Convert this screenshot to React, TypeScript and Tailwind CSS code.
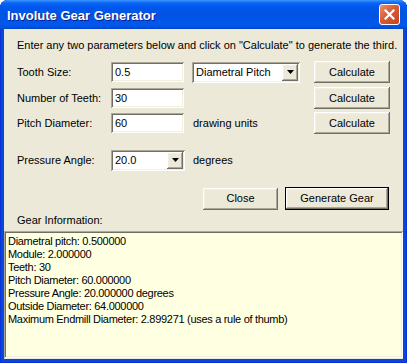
import React from 'react';

const raised =
  'bg-[#ECE9D8] shadow-[inset_-1px_-1px_0_#716F64,inset_1px_1px_0_#FFFFFF,inset_-2px_-2px_0_#ACA899,inset_2px_2px_0_#F1EFE2]';
const sunken =
  'shadow-[inset_1px_1px_0_#ACA899,inset_-1px_-1px_0_#FFFFFF,inset_2px_2px_0_#716F64,inset_-2px_-2px_0_#F1EFE2]';

function Field({ value, width }: { value: string; width: string }) {
  return (
    <div className={`${width} h-[20px] bg-white ${sunken} pl-[4px] flex items-center`}>{value}</div>
  );
}

function Arrow() {
  return (
    <div className={`w-[16px] h-[17px] ${raised} flex items-center justify-center`}>
      <svg width="7" height="4" viewBox="0 0 7 4">
        <path d="M0 0h7L3.5 4z" fill="#000" />
      </svg>
    </div>
  );
}

function Combo({ value, width }: { value: string; width: string }) {
  return (
    <div className={`${width} h-[21px] bg-white ${sunken} flex items-center pl-[4px] pr-[2px]`}>
      <span className="flex-1">{value}</span>
      <Arrow />
    </div>
  );
}

function Button({ label, width, isDefault }: { label: string; width: string; isDefault?: boolean }) {
  if (isDefault) {
    return (
      <div className={`${width} h-[23px] border border-black`}>
        <div className={`h-full ${raised} flex items-center justify-center`}>{label}</div>
      </div>
    );
  }
  return <div className={`${width} h-[22px] ${raised} flex items-center justify-center`}>{label}</div>;
}

const info = [
  'Diametral pitch: 0.500000',
  'Module: 2.000000',
  'Teeth: 30',
  'Pitch Diameter: 60.000000',
  'Pressure Angle: 20.000000 degrees',
  'Outside Diameter: 64.000000',
  'Maximum Endmill Diameter: 2.899271 (uses a rule of thumb)',
];

export default function App() {
  return (
    <div className="w-[407px] h-[363px] bg-white">
      <div className="w-[407px] h-[363px] flex flex-col rounded-t-[8px] overflow-hidden bg-[#0748D8] shadow-[inset_1px_0_0_#0831D9,inset_-1px_0_0_#0831D9,inset_0_-1px_0_#0831D9] px-[4px] pb-[4px] text-[11px] leading-[13px] text-black font-['Liberation_Sans',Arial,sans-serif]">
        {/* Title bar */}
        <div className="-mx-[4px] h-[29px] flex items-center pl-[7px] pr-[7px] bg-[linear-gradient(to_bottom,#3D95FF_0%,#0A66F5_10%,#0058EE_22%,#0054E3_50%,#0058EC_85%,#0052E0_93%,#0045C8_100%)]">
          <span className="flex-1 text-white font-bold text-[13px] [text-shadow:1px_1px_0_#0F1E88] pt-[2px]">
            Involute Gear Generator
          </span>
          <div className="w-[21px] h-[21px] rounded-[3px] border border-white bg-[linear-gradient(135deg,#E9906F_0%,#D95B33_45%,#C8431A_100%)] flex items-center justify-center">
            <svg width="11" height="11" viewBox="0 0 11 11">
              <path d="M1.5 1.5l8 8M9.5 1.5l-8 8" stroke="#fff" strokeWidth="2.2" strokeLinecap="square" />
            </svg>
          </div>
        </div>

        {/* Client area */}
        <div className="flex-1 flex flex-col bg-[#ECE9D8]">
          <div className="mt-[10px] pl-[13px]">
            Enter any two parameters below and click on "Calculate" to generate the third.
          </div>

          <div className="mt-[9px] h-[22px] flex items-center pl-[13px]">
            <span className="w-[94px]">Tooth Size:</span>
            <Field value="0.5" width="w-[73px]" />
            <div className="ml-[8px] w-[108px]">
              <Combo value="Diametral Pitch" width="w-[108px]" />
            </div>
            <div className="ml-[14px]">
              <Button label="Calculate" width="w-[76px]" />
            </div>
          </div>

          <div className="mt-[4px] h-[22px] flex items-center pl-[13px]">
            <span className="w-[94px]">Number of Teeth:</span>
            <Field value="30" width="w-[73px]" />
            <div className="ml-[8px] w-[108px]" />
            <div className="ml-[14px]">
              <Button label="Calculate" width="w-[76px]" />
            </div>
          </div>

          <div className="mt-[3px] h-[22px] flex items-center pl-[13px]">
            <span className="w-[94px]">Pitch Diameter:</span>
            <Field value="60" width="w-[73px]" />
            <span className="ml-[9px] w-[107px]">drawing units</span>
            <div className="ml-[14px]">
              <Button label="Calculate" width="w-[76px]" />
            </div>
          </div>

          <div className="mt-[15px] h-[22px] flex items-center pl-[13px]">
            <span className="w-[94px]">Pressure Angle:</span>
            <Combo value="20.0" width="w-[74px]" />
            <span className="ml-[8px]">degrees</span>
          </div>

          <div className="mt-[16px] flex items-center pl-[199px] gap-[7px]">
            <Button label="Close" width="w-[75px]" />
            <Button label="Generate Gear" width="w-[104px]" isDefault />
          </div>

          <div className="mt-[4px] pl-[13px] h-[13px]">Gear Information:</div>

          <div className={`mt-[4px] flex-1 mb-[1px] bg-[#FFFFE1] ${sunken} pt-[4px] pl-[4px] tracking-[-0.3px]`}>
            {info.map((line) => (
              <div key={line}>{line}</div>
            ))}
          </div>
        </div>
      </div>
    </div>
  );
}
